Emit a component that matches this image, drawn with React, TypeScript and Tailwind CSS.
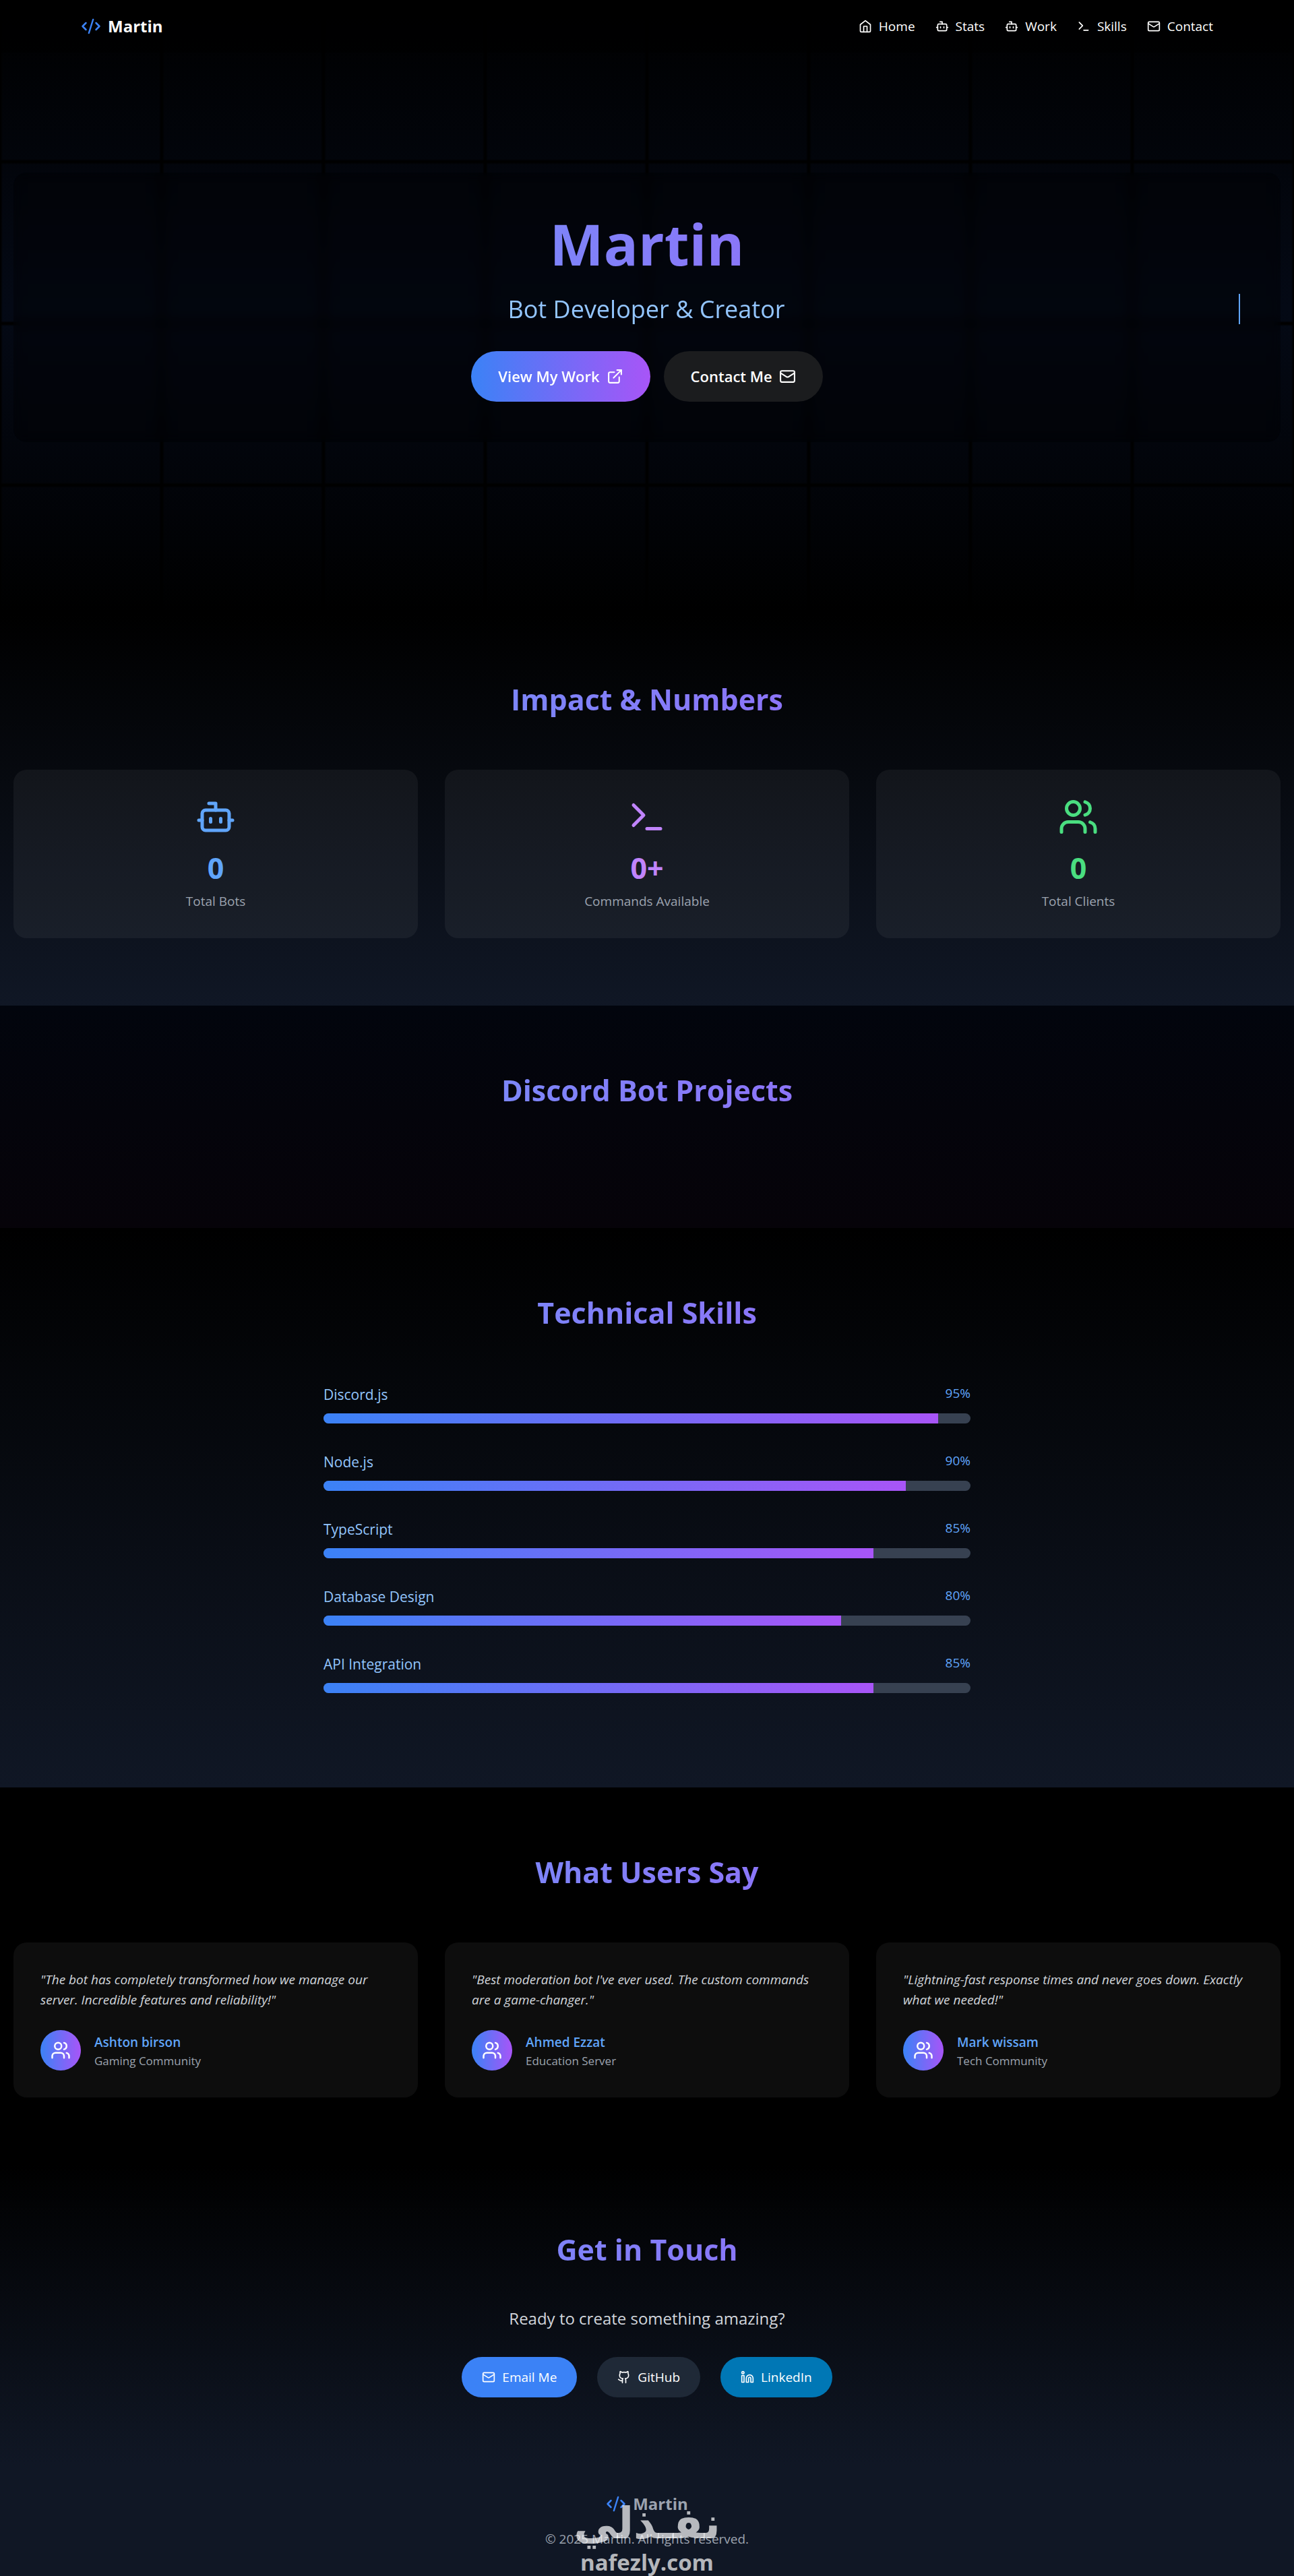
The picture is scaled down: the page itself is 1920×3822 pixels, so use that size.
import { Bot, CodeXml, ExternalLink, Github, Linkedin, Mail, Terminal, Users } from 'lucide-react';
import type { ComponentType, ReactNode } from 'react';

type IconType = ComponentType<{ className?: string }>;

function HomeIcon({ className }: { className?: string }) {
  return (
    <svg
      viewBox="0 0 24 24"
      fill="none"
      stroke="currentColor"
      strokeWidth="2"
      strokeLinecap="round"
      strokeLinejoin="round"
      className={className}
    >
      <path d="m3 9 9-7 9 7v11a2 2 0 0 1-2 2H5a2 2 0 0 1-2-2z" />
      <polyline points="9 22 9 12 15 12 15 22" />
    </svg>
  );
}

const navLinks: { label: string; href: string; icon: IconType }[] = [
  { label: 'Home', href: '#home', icon: HomeIcon },
  { label: 'Stats', href: '#stats', icon: Bot },
  { label: 'Work', href: '#work', icon: Bot },
  { label: 'Skills', href: '#skills', icon: Terminal },
  { label: 'Contact', href: '#contact', icon: Mail },
];

const stats: { value: string; label: string; icon: IconType; color: string }[] = [
  { value: '0', label: 'Total Bots', icon: Bot, color: 'text-[#60a5fa]' },
  { value: '0+', label: 'Commands Available', icon: Terminal, color: 'text-[#c084fc]' },
  { value: '0', label: 'Total Clients', icon: Users, color: 'text-[#4ade80]' },
];

const skills = [
  { name: 'Discord.js', level: 95 },
  { name: 'Node.js', level: 90 },
  { name: 'TypeScript', level: 85 },
  { name: 'Database Design', level: 80 },
  { name: 'API Integration', level: 85 },
];

const testimonials = [
  {
    quote: 'The bot has completely transformed how we manage our server. Incredible features and reliability!',
    name: 'Ashton birson',
    role: 'Gaming Community',
  },
  {
    quote: "Best moderation bot I've ever used. The custom commands are a game-changer.",
    name: 'Ahmed Ezzat',
    role: 'Education Server',
  },
  {
    quote: 'Lightning-fast response times and never goes down. Exactly what we needed!',
    name: 'Mark wissam',
    role: 'Tech Community',
  },
];

function SectionTitle({ children, className = 'mb-20' }: { children: ReactNode; className?: string }) {
  return (
    <h2
      className={`bg-linear-to-r/srgb from-[#60a5fa] to-[#a855f7] bg-clip-text text-center text-[43px] leading-[52px] font-bold text-transparent ${className}`}
    >
      {children}
    </h2>
  );
}

function Navbar() {
  return (
    <header className="absolute inset-x-0 top-0 z-10 bg-black/50">
      <div className="mx-auto flex h-[78px] max-w-[1680px] items-center justify-between">
        <a href="#home" className="flex items-center gap-2.5 text-2xl leading-9 font-bold">
          <CodeXml className="size-[30px] text-[#3b82f6]" />
          Martin
        </a>
        <nav className="flex gap-[30px]">
          {navLinks.map(({ label, href, icon: Icon }) => (
            <a key={label} href={href} className="flex items-center gap-2.5 text-[19px] leading-[30px]">
              <Icon className="size-5" />
              {label}
            </a>
          ))}
        </nav>
      </div>
    </header>
  );
}

function Hero() {
  return (
    <section
      id="home"
      className="relative flex min-h-[912px] items-center bg-linear-to-b/srgb from-black via-[#040915] to-black px-5"
    >
      {/* dark grid lines */}
      <div className="absolute inset-0 bg-[linear-gradient(to_right,#000_1px,transparent_4px,transparent_236px,#000_239px),linear-gradient(to_bottom,#000_1px,transparent_4px,transparent_236px,#000_239px)] bg-[size:240px_240px]" />
      <div className="relative w-full rounded-[20px] bg-black/30 p-[60px] backdrop-blur-sm">
        <h1 className="mb-[30px] bg-linear-to-r/srgb from-[#60a5fa] to-[#a855f7] bg-clip-text text-center text-[85px] leading-[90px] font-bold text-transparent">
          Martin
        </h1>
        <p className="mb-10 border-r-2 border-[#60a5fa] text-center text-4xl leading-[45px] text-[#93c5fd]">
          Bot Developer &amp; Creator
        </p>
        <div className="flex justify-center gap-5 text-[22px] leading-[35px] font-semibold">
          <a
            href="#work"
            className="flex items-center gap-2.5 rounded-full bg-linear-to-r/srgb from-[#3b82f6] to-[#a855f7] px-10 py-5"
          >
            View My Work
            <ExternalLink className="size-[25px]" />
          </a>
          <a href="#contact" className="flex items-center gap-2.5 rounded-full bg-[#1b1c1e] px-10 py-5">
            Contact Me
            <Mail className="size-[25px]" />
          </a>
        </div>
      </div>
    </section>
  );
}

function Stats() {
  return (
    <section id="stats" className="bg-linear-to-b/srgb from-black to-[#101725] px-5 py-[100px]">
      <SectionTitle className="mb-[78px]">Impact &amp; Numbers</SectionTitle>
      <div className="grid grid-cols-3 gap-10">
        {stats.map(({ value, label, icon: Icon, color }) => (
          <div key={label} className="flex flex-col items-center rounded-[20px] bg-white/5 p-10">
            <Icon className={`mb-5 size-[60px] ${color}`} />
            <div className={`mb-2 text-[43px] leading-[52px] font-bold ${color}`}>{value}</div>
            <div className="text-[19px] leading-[30px] text-[#9ca3af]">{label}</div>
          </div>
        ))}
      </div>
    </section>
  );
}

function Projects() {
  return (
    <section id="work" className="bg-linear-to-b/srgb from-[#02050d] to-[#060309] px-5 py-[100px]">
      <SectionTitle className="mb-[78px]">Discord Bot Projects</SectionTitle>
    </section>
  );
}

function Skills() {
  return (
    <section id="skills" className="bg-linear-to-b/srgb from-black to-[#101725] px-5 py-[100px]">
      <SectionTitle className="mb-[78px]">Technical Skills</SectionTitle>
      <div className="mx-auto max-w-[960px]">
        {skills.map((skill) => (
          <div key={skill.name} className="mb-10">
            <div className="mb-2.5 flex justify-between">
              <span className="text-[21px] leading-[35px] text-[#93c5fd]">{skill.name}</span>
              <span className="text-[19px] leading-[30px] text-[#60a5fa]">{skill.level}%</span>
            </div>
            <div className="h-[15px] overflow-hidden rounded-full bg-[#374151]">
              <div
                className="h-full bg-linear-to-r/srgb from-[#3b82f6] to-[#a855f7]"
                style={{ width: `${skill.level}%` }}
              />
            </div>
          </div>
        ))}
      </div>
    </section>
  );
}

function Testimonials() {
  return (
    <section className="bg-black px-5 py-[100px]">
      <SectionTitle className="mb-[78px]">What Users Say</SectionTitle>
      <div className="grid grid-cols-3 gap-10">
        {testimonials.map((item) => (
          <div key={item.name} className="rounded-[20px] bg-white/5 p-10">
            <p className="mb-[30px] text-[19px] leading-[30px] text-[#d1d5db] italic">"{item.quote}"</p>
            <div className="flex items-center gap-5">
              <div className="flex size-[60px] items-center justify-center rounded-full bg-linear-to-r/srgb from-[#3b82f6] to-[#a855f7]">
                <Users className="size-[30px]" />
              </div>
              <div>
                <h3 className="text-[19px] leading-[30px] font-semibold text-[#60a5fa]">{item.name}</h3>
                <p className="text-[17px] leading-[25px] text-[#9ca3af]">{item.role}</p>
              </div>
            </div>
          </div>
        ))}
      </div>
    </section>
  );
}

function Contact() {
  return (
    <section id="contact" className="bg-linear-to-b/srgb from-black to-[#101725] px-5 py-[100px]">
      <SectionTitle className="mb-[58px]">Get in Touch</SectionTitle>
      <p className="mb-10 text-center text-2xl leading-[35px] text-[#d1d5db]">
        Ready to create something amazing?
      </p>
      <div className="flex justify-center gap-[30px] text-[19px] leading-[30px]">
        <a href="#email" className="flex items-center gap-2.5 rounded-full bg-[#3b82f6] px-[30px] py-[15px]">
          <Mail className="size-5" />
          Email Me
        </a>
        <a href="#github" className="flex items-center gap-2.5 rounded-full bg-[#1f2937] px-[30px] py-[15px]">
          <Github className="size-5" />
          GitHub
        </a>
        <a href="#linkedin" className="flex items-center gap-2.5 rounded-full bg-[#0077b5] px-[30px] py-[15px]">
          <Linkedin className="size-5" />
          LinkedIn
        </a>
      </div>
    </section>
  );
}

function Footer() {
  return (
    <footer className="relative bg-[#101725] py-10 text-center text-[#9ca3af]">
      <div className="mb-5 flex items-center justify-center gap-2.5 text-2xl leading-[35px] font-bold">
        <CodeXml className="size-[30px] text-[#3b82f6]" />
        Martin
      </div>
      <p className="text-[19px] leading-[30px]">© 2025 Martin. All rights reserved.</p>
      {/* watermark */}
      <div className="absolute inset-x-0 bottom-0 font-['DejaVu_Sans',sans-serif] font-bold text-white/70">
        <div lang="ar" dir="rtl" className="text-[64px] leading-[76px]">
          نفـذلي
        </div>
        <div className="font-['Open_Sans',sans-serif] text-[33px] leading-10">nafezly.com</div>
      </div>
    </footer>
  );
}

export default function App() {
  return (
    <div className="relative bg-black font-['Open_Sans',sans-serif] text-white">
      <Navbar />
      <main>
        <Hero />
        <Stats />
        <Projects />
        <Skills />
        <Testimonials />
        <Contact />
      </main>
      <Footer />
    </div>
  );
}
